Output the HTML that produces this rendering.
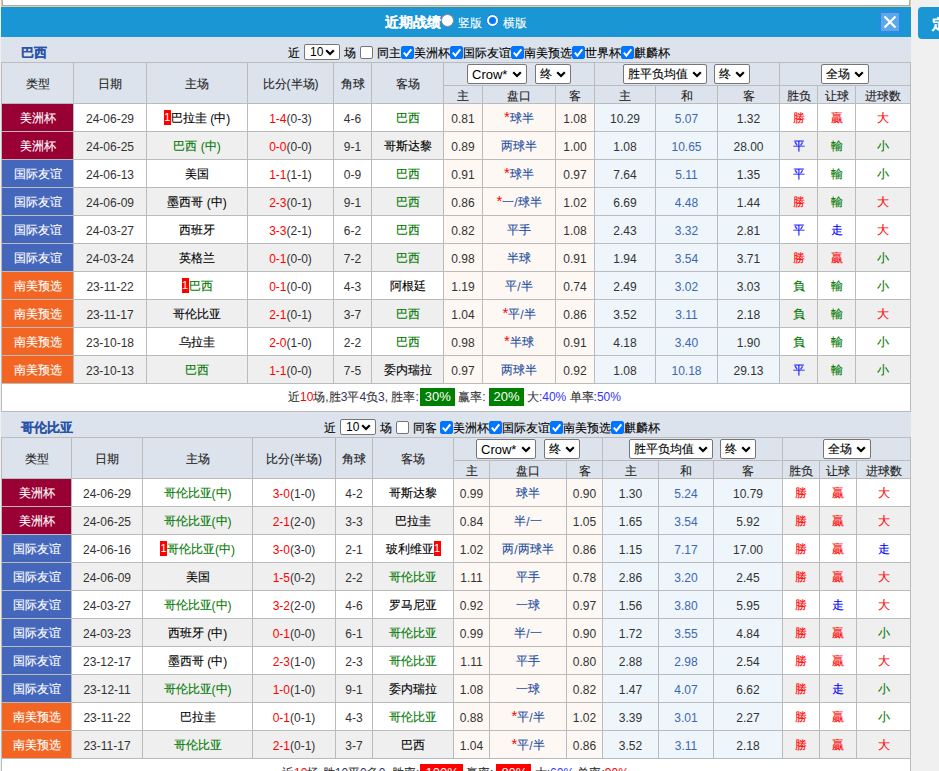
<!DOCTYPE html><html><head><meta charset="utf-8"><style>
html,body{margin:0;padding:0;}
body{width:939px;height:771px;overflow:hidden;background:#f0f0f0;position:relative;font-family:"Liberation Sans",sans-serif;font-size:12px;}
#root>div{position:absolute;display:flex;align-items:center;justify-content:center;white-space:nowrap;box-sizing:border-box;}
#root>div.tx{display:block;height:auto;width:auto;line-height:16px;}
.c{-webkit-text-stroke-width:0.12px}.cd{position:relative;top:-1px}
.rb{background:#f00;color:#fff;display:inline-block;width:7px;height:15px;line-height:15px;text-align:center;font-size:11px;position:relative;top:-2px}
#root>div.sel{height:20px;background:#fff;border:1px solid #767676;border-radius:2px;justify-content:flex-start;padding-left:4px;font-size:13px;color:#000;}
.sel .chev{position:absolute;right:4px;top:6px;}
#root>div.sel.sm{height:16px;padding-left:5px;font-size:12px}
.sel.sm .chev{top:4px}
#root>div.cb{width:13px;height:13px;border:1px solid #767676;border-radius:2px;background:#fff;}
#root>div.cb.on{background:#0075ff;border-color:#0075ff;}
.cb svg{position:absolute;left:-1px;top:-1px;}
</style></head><body><div id="root"><div style="left:1px;top:-10px;width:910px;height:17px;background:#e9cf9b"></div><div style="left:2px;top:-10px;width:908px;height:16px;background:#aaaaaa"></div><div style="left:3px;top:-10px;width:906px;height:15px;background:#ffffff"></div><div style="left:1px;top:7px;width:910px;height:30px;background:#1b96d5"></div><div class="tx" style="left:385px;top:13px;color:#fff;font-weight:bold;font-size:14px;line-height:18px"><span class="c">近期战绩</span></div><div style="left:441px;top:14px;width:13px;height:13px;border-radius:50%;background:#fff;border:1px solid #888"></div><div class="tx" style="left:458px;top:15px;color:#fff;font-size:12px"><span class="c">竖版</span></div><div style="left:486px;top:14px;width:13px;height:13px;border-radius:50%;background:#fff;border:1px solid #0075ff"><div style="width:7px;height:7px;border-radius:50%;background:#0075ff"></div></div><div class="tx" style="left:503px;top:15px;color:#fff;font-size:12px"><span class="c">横版</span></div><div style="left:879px;top:11px;width:22px;height:22px;background:#2b8be2"></div><div style="left:881px;top:13px;width:18px;height:18px;background:#5ca8e8"></div><div style="left:879px;top:11px;width:22px;height:22px"><svg width="22" height="22" viewBox="0 0 22 22"><path d="M5.5 5.5 L16.5 16.5 M16.5 5.5 L5.5 16.5" stroke="#fff" stroke-width="2.2"/></svg></div><div style="left:918px;top:7px;width:40px;height:32px;background:#1b96d5;border-radius:4px;color:#fff;font-size:14px;font-weight:bold;justify-content:flex-start;padding-left:14px;padding-top:4px"><span class="c">定</span></div><div style="left:1px;top:37px;width:910px;height:734px;background:#dce3ec"></div><div style="left:21px;top:37px;width:120px;height:25px;color:#2b53a8;font-weight:bold;font-size:13px;justify-content:flex-start;padding-top:6px;box-sizing:border-box"><span class="c">巴西</span></div><div class="tx" style="left:288px;top:45px;"><span class="c">近</span></div><div class="sel sm" style="left:304px;top:44px;width:36px;font-size:12px"><span class="st">10</span><svg class="chev" width="10" height="7" viewBox="0 0 10 7"><path d="M1.2 1.2 L5 5 L8.8 1.2" stroke="#000" stroke-width="2.2" fill="none"/></svg></div><div class="tx" style="left:344px;top:45px;"><span class="c">场</span></div><div class="cb" style="left:360px;top:46px"></div><div class="tx" style="left:377px;top:45px;"><span class="c">同主</span></div><div class="cb on" style="left:401px;top:46px"><svg width="13" height="13" viewBox="0 0 13 13"><path d="M2.8 6.6 L5.4 9.6 L10.3 3.4" stroke="#fff" stroke-width="2" fill="none"/></svg></div><div class="tx" style="left:414px;top:45px;"><span class="c">美洲杯</span></div><div class="cb on" style="left:450px;top:46px"><svg width="13" height="13" viewBox="0 0 13 13"><path d="M2.8 6.6 L5.4 9.6 L10.3 3.4" stroke="#fff" stroke-width="2" fill="none"/></svg></div><div class="tx" style="left:463px;top:45px;"><span class="c">国际友谊</span></div><div class="cb on" style="left:511px;top:46px"><svg width="13" height="13" viewBox="0 0 13 13"><path d="M2.8 6.6 L5.4 9.6 L10.3 3.4" stroke="#fff" stroke-width="2" fill="none"/></svg></div><div class="tx" style="left:524px;top:45px;"><span class="c">南美预选</span></div><div class="cb on" style="left:572px;top:46px"><svg width="13" height="13" viewBox="0 0 13 13"><path d="M2.8 6.6 L5.4 9.6 L10.3 3.4" stroke="#fff" stroke-width="2" fill="none"/></svg></div><div class="tx" style="left:585px;top:45px;"><span class="c">世界杯</span></div><div class="cb on" style="left:621px;top:46px"><svg width="13" height="13" viewBox="0 0 13 13"><path d="M2.8 6.6 L5.4 9.6 L10.3 3.4" stroke="#fff" stroke-width="2" fill="none"/></svg></div><div class="tx" style="left:634px;top:45px;"><span class="c">麒麟杯</span></div><div style="left:1px;top:62px;width:909px;height:41px;background:#dce3ec"></div><div style="left:2px;top:104px;width:71px;height:27px;background:#990033;padding-top:3px"><span style="color:#fff"><span class="c cd">美洲杯</span></span></div><div style="left:74px;top:104px;width:72px;height:27px;background:#ffffff;padding-top:3px"><span style="color:#333333">24-06-29</span></div><div style="left:147px;top:104px;width:100px;height:27px;background:#ffffff;padding-top:3px"><span class="rb">1</span><span style="color:#000"><span class="c cd">巴拉圭</span> (<span class="c cd">中</span>)</span></div><div style="left:248px;top:104px;width:85px;height:27px;background:#ffffff;padding-top:3px"><span style="color:#ff0000">1-4</span><span style="color:#333333">(0-3)</span></div><div style="left:334px;top:104px;width:37px;height:27px;background:#ffffff;padding-top:3px"><span style="color:#333333">4-6</span></div><div style="left:372px;top:104px;width:71px;height:27px;background:#ffffff;padding-top:3px"><span style="color:#007800"><span class="c cd">巴西</span></span></div><div style="left:444px;top:104px;width:38px;height:27px;background:#fdf8f4;padding-top:3px"><span style="color:#333333">0.81</span></div><div style="left:483px;top:104px;width:72px;height:27px;background:#fdf8f4;padding-top:3px"><span style="color:#ff0000;font-size:15px;position:relative;top:-3px">*</span><span style="color:#1f4f9f"><span class="c cd">球半</span></span></div><div style="left:556px;top:104px;width:38px;height:27px;background:#fdf8f4;padding-top:3px"><span style="color:#333333">1.08</span></div><div style="left:595px;top:104px;width:60px;height:27px;background:#eef6fb;padding-top:3px"><span style="color:#333333">10.29</span></div><div style="left:656px;top:104px;width:61px;height:27px;background:#eef6fb;padding-top:3px"><span style="color:#3d66b0">5.07</span></div><div style="left:718px;top:104px;width:61px;height:27px;background:#eef6fb;padding-top:3px"><span style="color:#333333">1.32</span></div><div style="left:780px;top:104px;width:37px;height:27px;background:#ffffff;padding-top:3px"><span style="color:#ff0000"><span class="c cd">勝</span></span></div><div style="left:818px;top:104px;width:37px;height:27px;background:#ffffff;padding-top:3px"><span style="color:#ff0000"><span class="c cd">贏</span></span></div><div style="left:856px;top:104px;width:54px;height:27px;background:#ffffff;padding-top:3px"><span style="color:#ff0000"><span class="c cd">大</span></span></div><div style="left:2px;top:132px;width:71px;height:27px;background:#990033;padding-top:3px"><span style="color:#fff"><span class="c cd">美洲杯</span></span></div><div style="left:74px;top:132px;width:72px;height:27px;background:#efefef;padding-top:3px"><span style="color:#333333">24-06-25</span></div><div style="left:147px;top:132px;width:100px;height:27px;background:#efefef;padding-top:3px"><span style="color:#007800"><span class="c cd">巴西</span> (<span class="c cd">中</span>)</span></div><div style="left:248px;top:132px;width:85px;height:27px;background:#efefef;padding-top:3px"><span style="color:#ff0000">0-0</span><span style="color:#333333">(0-0)</span></div><div style="left:334px;top:132px;width:37px;height:27px;background:#efefef;padding-top:3px"><span style="color:#333333">9-1</span></div><div style="left:372px;top:132px;width:71px;height:27px;background:#efefef;padding-top:3px"><span style="color:#000"><span class="c cd">哥斯达黎</span></span></div><div style="left:444px;top:132px;width:38px;height:27px;background:#fdf8f4;padding-top:3px"><span style="color:#333333">0.89</span></div><div style="left:483px;top:132px;width:72px;height:27px;background:#fdf8f4;padding-top:3px"><span style="color:#1f4f9f"><span class="c cd">两球半</span></span></div><div style="left:556px;top:132px;width:38px;height:27px;background:#fdf8f4;padding-top:3px"><span style="color:#333333">1.00</span></div><div style="left:595px;top:132px;width:60px;height:27px;background:#eef6fb;padding-top:3px"><span style="color:#333333">1.08</span></div><div style="left:656px;top:132px;width:61px;height:27px;background:#eef6fb;padding-top:3px"><span style="color:#3d66b0">10.65</span></div><div style="left:718px;top:132px;width:61px;height:27px;background:#eef6fb;padding-top:3px"><span style="color:#333333">28.00</span></div><div style="left:780px;top:132px;width:37px;height:27px;background:#efefef;padding-top:3px"><span style="color:#0000ff"><span class="c cd">平</span></span></div><div style="left:818px;top:132px;width:37px;height:27px;background:#efefef;padding-top:3px"><span style="color:#007800"><span class="c cd">輸</span></span></div><div style="left:856px;top:132px;width:54px;height:27px;background:#efefef;padding-top:3px"><span style="color:#007800"><span class="c cd">小</span></span></div><div style="left:2px;top:160px;width:71px;height:27px;background:#4466bb;padding-top:3px"><span style="color:#fff"><span class="c cd">国际友谊</span></span></div><div style="left:74px;top:160px;width:72px;height:27px;background:#ffffff;padding-top:3px"><span style="color:#333333">24-06-13</span></div><div style="left:147px;top:160px;width:100px;height:27px;background:#ffffff;padding-top:3px"><span style="color:#000"><span class="c cd">美国</span></span></div><div style="left:248px;top:160px;width:85px;height:27px;background:#ffffff;padding-top:3px"><span style="color:#ff0000">1-1</span><span style="color:#333333">(1-1)</span></div><div style="left:334px;top:160px;width:37px;height:27px;background:#ffffff;padding-top:3px"><span style="color:#333333">0-9</span></div><div style="left:372px;top:160px;width:71px;height:27px;background:#ffffff;padding-top:3px"><span style="color:#007800"><span class="c cd">巴西</span></span></div><div style="left:444px;top:160px;width:38px;height:27px;background:#fdf8f4;padding-top:3px"><span style="color:#333333">0.91</span></div><div style="left:483px;top:160px;width:72px;height:27px;background:#fdf8f4;padding-top:3px"><span style="color:#ff0000;font-size:15px;position:relative;top:-3px">*</span><span style="color:#1f4f9f"><span class="c cd">球半</span></span></div><div style="left:556px;top:160px;width:38px;height:27px;background:#fdf8f4;padding-top:3px"><span style="color:#333333">0.97</span></div><div style="left:595px;top:160px;width:60px;height:27px;background:#eef6fb;padding-top:3px"><span style="color:#333333">7.64</span></div><div style="left:656px;top:160px;width:61px;height:27px;background:#eef6fb;padding-top:3px"><span style="color:#3d66b0">5.11</span></div><div style="left:718px;top:160px;width:61px;height:27px;background:#eef6fb;padding-top:3px"><span style="color:#333333">1.35</span></div><div style="left:780px;top:160px;width:37px;height:27px;background:#ffffff;padding-top:3px"><span style="color:#0000ff"><span class="c cd">平</span></span></div><div style="left:818px;top:160px;width:37px;height:27px;background:#ffffff;padding-top:3px"><span style="color:#007800"><span class="c cd">輸</span></span></div><div style="left:856px;top:160px;width:54px;height:27px;background:#ffffff;padding-top:3px"><span style="color:#007800"><span class="c cd">小</span></span></div><div style="left:2px;top:188px;width:71px;height:27px;background:#4466bb;padding-top:3px"><span style="color:#fff"><span class="c cd">国际友谊</span></span></div><div style="left:74px;top:188px;width:72px;height:27px;background:#efefef;padding-top:3px"><span style="color:#333333">24-06-09</span></div><div style="left:147px;top:188px;width:100px;height:27px;background:#efefef;padding-top:3px"><span style="color:#000"><span class="c cd">墨西哥</span> (<span class="c cd">中</span>)</span></div><div style="left:248px;top:188px;width:85px;height:27px;background:#efefef;padding-top:3px"><span style="color:#ff0000">2-3</span><span style="color:#333333">(0-1)</span></div><div style="left:334px;top:188px;width:37px;height:27px;background:#efefef;padding-top:3px"><span style="color:#333333">9-1</span></div><div style="left:372px;top:188px;width:71px;height:27px;background:#efefef;padding-top:3px"><span style="color:#007800"><span class="c cd">巴西</span></span></div><div style="left:444px;top:188px;width:38px;height:27px;background:#fdf8f4;padding-top:3px"><span style="color:#333333">0.86</span></div><div style="left:483px;top:188px;width:72px;height:27px;background:#fdf8f4;padding-top:3px"><span style="color:#ff0000;font-size:15px;position:relative;top:-3px">*</span><span style="color:#1f4f9f"><span class="c cd">一</span>/<span class="c cd">球半</span></span></div><div style="left:556px;top:188px;width:38px;height:27px;background:#fdf8f4;padding-top:3px"><span style="color:#333333">1.02</span></div><div style="left:595px;top:188px;width:60px;height:27px;background:#eef6fb;padding-top:3px"><span style="color:#333333">6.69</span></div><div style="left:656px;top:188px;width:61px;height:27px;background:#eef6fb;padding-top:3px"><span style="color:#3d66b0">4.48</span></div><div style="left:718px;top:188px;width:61px;height:27px;background:#eef6fb;padding-top:3px"><span style="color:#333333">1.44</span></div><div style="left:780px;top:188px;width:37px;height:27px;background:#efefef;padding-top:3px"><span style="color:#ff0000"><span class="c cd">勝</span></span></div><div style="left:818px;top:188px;width:37px;height:27px;background:#efefef;padding-top:3px"><span style="color:#007800"><span class="c cd">輸</span></span></div><div style="left:856px;top:188px;width:54px;height:27px;background:#efefef;padding-top:3px"><span style="color:#ff0000"><span class="c cd">大</span></span></div><div style="left:2px;top:216px;width:71px;height:27px;background:#4466bb;padding-top:3px"><span style="color:#fff"><span class="c cd">国际友谊</span></span></div><div style="left:74px;top:216px;width:72px;height:27px;background:#ffffff;padding-top:3px"><span style="color:#333333">24-03-27</span></div><div style="left:147px;top:216px;width:100px;height:27px;background:#ffffff;padding-top:3px"><span style="color:#000"><span class="c cd">西班牙</span></span></div><div style="left:248px;top:216px;width:85px;height:27px;background:#ffffff;padding-top:3px"><span style="color:#ff0000">3-3</span><span style="color:#333333">(2-1)</span></div><div style="left:334px;top:216px;width:37px;height:27px;background:#ffffff;padding-top:3px"><span style="color:#333333">6-2</span></div><div style="left:372px;top:216px;width:71px;height:27px;background:#ffffff;padding-top:3px"><span style="color:#007800"><span class="c cd">巴西</span></span></div><div style="left:444px;top:216px;width:38px;height:27px;background:#fdf8f4;padding-top:3px"><span style="color:#333333">0.82</span></div><div style="left:483px;top:216px;width:72px;height:27px;background:#fdf8f4;padding-top:3px"><span style="color:#1f4f9f"><span class="c cd">平手</span></span></div><div style="left:556px;top:216px;width:38px;height:27px;background:#fdf8f4;padding-top:3px"><span style="color:#333333">1.08</span></div><div style="left:595px;top:216px;width:60px;height:27px;background:#eef6fb;padding-top:3px"><span style="color:#333333">2.43</span></div><div style="left:656px;top:216px;width:61px;height:27px;background:#eef6fb;padding-top:3px"><span style="color:#3d66b0">3.32</span></div><div style="left:718px;top:216px;width:61px;height:27px;background:#eef6fb;padding-top:3px"><span style="color:#333333">2.81</span></div><div style="left:780px;top:216px;width:37px;height:27px;background:#ffffff;padding-top:3px"><span style="color:#0000ff"><span class="c cd">平</span></span></div><div style="left:818px;top:216px;width:37px;height:27px;background:#ffffff;padding-top:3px"><span style="color:#0000ff"><span class="c cd">走</span></span></div><div style="left:856px;top:216px;width:54px;height:27px;background:#ffffff;padding-top:3px"><span style="color:#ff0000"><span class="c cd">大</span></span></div><div style="left:2px;top:244px;width:71px;height:27px;background:#4466bb;padding-top:3px"><span style="color:#fff"><span class="c cd">国际友谊</span></span></div><div style="left:74px;top:244px;width:72px;height:27px;background:#efefef;padding-top:3px"><span style="color:#333333">24-03-24</span></div><div style="left:147px;top:244px;width:100px;height:27px;background:#efefef;padding-top:3px"><span style="color:#000"><span class="c cd">英格兰</span></span></div><div style="left:248px;top:244px;width:85px;height:27px;background:#efefef;padding-top:3px"><span style="color:#ff0000">0-1</span><span style="color:#333333">(0-0)</span></div><div style="left:334px;top:244px;width:37px;height:27px;background:#efefef;padding-top:3px"><span style="color:#333333">7-2</span></div><div style="left:372px;top:244px;width:71px;height:27px;background:#efefef;padding-top:3px"><span style="color:#007800"><span class="c cd">巴西</span></span></div><div style="left:444px;top:244px;width:38px;height:27px;background:#fdf8f4;padding-top:3px"><span style="color:#333333">0.98</span></div><div style="left:483px;top:244px;width:72px;height:27px;background:#fdf8f4;padding-top:3px"><span style="color:#1f4f9f"><span class="c cd">半球</span></span></div><div style="left:556px;top:244px;width:38px;height:27px;background:#fdf8f4;padding-top:3px"><span style="color:#333333">0.91</span></div><div style="left:595px;top:244px;width:60px;height:27px;background:#eef6fb;padding-top:3px"><span style="color:#333333">1.94</span></div><div style="left:656px;top:244px;width:61px;height:27px;background:#eef6fb;padding-top:3px"><span style="color:#3d66b0">3.54</span></div><div style="left:718px;top:244px;width:61px;height:27px;background:#eef6fb;padding-top:3px"><span style="color:#333333">3.71</span></div><div style="left:780px;top:244px;width:37px;height:27px;background:#efefef;padding-top:3px"><span style="color:#ff0000"><span class="c cd">勝</span></span></div><div style="left:818px;top:244px;width:37px;height:27px;background:#efefef;padding-top:3px"><span style="color:#ff0000"><span class="c cd">贏</span></span></div><div style="left:856px;top:244px;width:54px;height:27px;background:#efefef;padding-top:3px"><span style="color:#007800"><span class="c cd">小</span></span></div><div style="left:2px;top:272px;width:71px;height:27px;background:#f26522;padding-top:3px"><span style="color:#fff"><span class="c cd">南美预选</span></span></div><div style="left:74px;top:272px;width:72px;height:27px;background:#ffffff;padding-top:3px"><span style="color:#333333">23-11-22</span></div><div style="left:147px;top:272px;width:100px;height:27px;background:#ffffff;padding-top:3px"><span class="rb">1</span><span style="color:#007800"><span class="c cd">巴西</span></span></div><div style="left:248px;top:272px;width:85px;height:27px;background:#ffffff;padding-top:3px"><span style="color:#ff0000">0-1</span><span style="color:#333333">(0-0)</span></div><div style="left:334px;top:272px;width:37px;height:27px;background:#ffffff;padding-top:3px"><span style="color:#333333">4-3</span></div><div style="left:372px;top:272px;width:71px;height:27px;background:#ffffff;padding-top:3px"><span style="color:#000"><span class="c cd">阿根廷</span></span></div><div style="left:444px;top:272px;width:38px;height:27px;background:#fdf8f4;padding-top:3px"><span style="color:#333333">1.19</span></div><div style="left:483px;top:272px;width:72px;height:27px;background:#fdf8f4;padding-top:3px"><span style="color:#1f4f9f"><span class="c cd">平</span>/<span class="c cd">半</span></span></div><div style="left:556px;top:272px;width:38px;height:27px;background:#fdf8f4;padding-top:3px"><span style="color:#333333">0.74</span></div><div style="left:595px;top:272px;width:60px;height:27px;background:#eef6fb;padding-top:3px"><span style="color:#333333">2.49</span></div><div style="left:656px;top:272px;width:61px;height:27px;background:#eef6fb;padding-top:3px"><span style="color:#3d66b0">3.02</span></div><div style="left:718px;top:272px;width:61px;height:27px;background:#eef6fb;padding-top:3px"><span style="color:#333333">3.03</span></div><div style="left:780px;top:272px;width:37px;height:27px;background:#ffffff;padding-top:3px"><span style="color:#007800"><span class="c cd">負</span></span></div><div style="left:818px;top:272px;width:37px;height:27px;background:#ffffff;padding-top:3px"><span style="color:#007800"><span class="c cd">輸</span></span></div><div style="left:856px;top:272px;width:54px;height:27px;background:#ffffff;padding-top:3px"><span style="color:#007800"><span class="c cd">小</span></span></div><div style="left:2px;top:300px;width:71px;height:27px;background:#f26522;padding-top:3px"><span style="color:#fff"><span class="c cd">南美预选</span></span></div><div style="left:74px;top:300px;width:72px;height:27px;background:#efefef;padding-top:3px"><span style="color:#333333">23-11-17</span></div><div style="left:147px;top:300px;width:100px;height:27px;background:#efefef;padding-top:3px"><span style="color:#000"><span class="c cd">哥伦比亚</span></span></div><div style="left:248px;top:300px;width:85px;height:27px;background:#efefef;padding-top:3px"><span style="color:#ff0000">2-1</span><span style="color:#333333">(0-1)</span></div><div style="left:334px;top:300px;width:37px;height:27px;background:#efefef;padding-top:3px"><span style="color:#333333">3-7</span></div><div style="left:372px;top:300px;width:71px;height:27px;background:#efefef;padding-top:3px"><span style="color:#007800"><span class="c cd">巴西</span></span></div><div style="left:444px;top:300px;width:38px;height:27px;background:#fdf8f4;padding-top:3px"><span style="color:#333333">1.04</span></div><div style="left:483px;top:300px;width:72px;height:27px;background:#fdf8f4;padding-top:3px"><span style="color:#ff0000;font-size:15px;position:relative;top:-3px">*</span><span style="color:#1f4f9f"><span class="c cd">平</span>/<span class="c cd">半</span></span></div><div style="left:556px;top:300px;width:38px;height:27px;background:#fdf8f4;padding-top:3px"><span style="color:#333333">0.86</span></div><div style="left:595px;top:300px;width:60px;height:27px;background:#eef6fb;padding-top:3px"><span style="color:#333333">3.52</span></div><div style="left:656px;top:300px;width:61px;height:27px;background:#eef6fb;padding-top:3px"><span style="color:#3d66b0">3.11</span></div><div style="left:718px;top:300px;width:61px;height:27px;background:#eef6fb;padding-top:3px"><span style="color:#333333">2.18</span></div><div style="left:780px;top:300px;width:37px;height:27px;background:#efefef;padding-top:3px"><span style="color:#007800"><span class="c cd">負</span></span></div><div style="left:818px;top:300px;width:37px;height:27px;background:#efefef;padding-top:3px"><span style="color:#007800"><span class="c cd">輸</span></span></div><div style="left:856px;top:300px;width:54px;height:27px;background:#efefef;padding-top:3px"><span style="color:#ff0000"><span class="c cd">大</span></span></div><div style="left:2px;top:328px;width:71px;height:27px;background:#f26522;padding-top:3px"><span style="color:#fff"><span class="c cd">南美预选</span></span></div><div style="left:74px;top:328px;width:72px;height:27px;background:#ffffff;padding-top:3px"><span style="color:#333333">23-10-18</span></div><div style="left:147px;top:328px;width:100px;height:27px;background:#ffffff;padding-top:3px"><span style="color:#000"><span class="c cd">乌拉圭</span></span></div><div style="left:248px;top:328px;width:85px;height:27px;background:#ffffff;padding-top:3px"><span style="color:#ff0000">2-0</span><span style="color:#333333">(1-0)</span></div><div style="left:334px;top:328px;width:37px;height:27px;background:#ffffff;padding-top:3px"><span style="color:#333333">2-2</span></div><div style="left:372px;top:328px;width:71px;height:27px;background:#ffffff;padding-top:3px"><span style="color:#007800"><span class="c cd">巴西</span></span></div><div style="left:444px;top:328px;width:38px;height:27px;background:#fdf8f4;padding-top:3px"><span style="color:#333333">0.98</span></div><div style="left:483px;top:328px;width:72px;height:27px;background:#fdf8f4;padding-top:3px"><span style="color:#ff0000;font-size:15px;position:relative;top:-3px">*</span><span style="color:#1f4f9f"><span class="c cd">半球</span></span></div><div style="left:556px;top:328px;width:38px;height:27px;background:#fdf8f4;padding-top:3px"><span style="color:#333333">0.91</span></div><div style="left:595px;top:328px;width:60px;height:27px;background:#eef6fb;padding-top:3px"><span style="color:#333333">4.18</span></div><div style="left:656px;top:328px;width:61px;height:27px;background:#eef6fb;padding-top:3px"><span style="color:#3d66b0">3.40</span></div><div style="left:718px;top:328px;width:61px;height:27px;background:#eef6fb;padding-top:3px"><span style="color:#333333">1.90</span></div><div style="left:780px;top:328px;width:37px;height:27px;background:#ffffff;padding-top:3px"><span style="color:#007800"><span class="c cd">負</span></span></div><div style="left:818px;top:328px;width:37px;height:27px;background:#ffffff;padding-top:3px"><span style="color:#007800"><span class="c cd">輸</span></span></div><div style="left:856px;top:328px;width:54px;height:27px;background:#ffffff;padding-top:3px"><span style="color:#007800"><span class="c cd">小</span></span></div><div style="left:2px;top:356px;width:71px;height:27px;background:#f26522;padding-top:3px"><span style="color:#fff"><span class="c cd">南美预选</span></span></div><div style="left:74px;top:356px;width:72px;height:27px;background:#efefef;padding-top:3px"><span style="color:#333333">23-10-13</span></div><div style="left:147px;top:356px;width:100px;height:27px;background:#efefef;padding-top:3px"><span style="color:#007800"><span class="c cd">巴西</span></span></div><div style="left:248px;top:356px;width:85px;height:27px;background:#efefef;padding-top:3px"><span style="color:#ff0000">1-1</span><span style="color:#333333">(0-0)</span></div><div style="left:334px;top:356px;width:37px;height:27px;background:#efefef;padding-top:3px"><span style="color:#333333">7-5</span></div><div style="left:372px;top:356px;width:71px;height:27px;background:#efefef;padding-top:3px"><span style="color:#000"><span class="c cd">委内瑞拉</span></span></div><div style="left:444px;top:356px;width:38px;height:27px;background:#fdf8f4;padding-top:3px"><span style="color:#333333">0.97</span></div><div style="left:483px;top:356px;width:72px;height:27px;background:#fdf8f4;padding-top:3px"><span style="color:#1f4f9f"><span class="c cd">两球半</span></span></div><div style="left:556px;top:356px;width:38px;height:27px;background:#fdf8f4;padding-top:3px"><span style="color:#333333">0.92</span></div><div style="left:595px;top:356px;width:60px;height:27px;background:#eef6fb;padding-top:3px"><span style="color:#333333">1.08</span></div><div style="left:656px;top:356px;width:61px;height:27px;background:#eef6fb;padding-top:3px"><span style="color:#3d66b0">10.18</span></div><div style="left:718px;top:356px;width:61px;height:27px;background:#eef6fb;padding-top:3px"><span style="color:#333333">29.13</span></div><div style="left:780px;top:356px;width:37px;height:27px;background:#efefef;padding-top:3px"><span style="color:#0000ff"><span class="c cd">平</span></span></div><div style="left:818px;top:356px;width:37px;height:27px;background:#efefef;padding-top:3px"><span style="color:#007800"><span class="c cd">輸</span></span></div><div style="left:856px;top:356px;width:54px;height:27px;background:#efefef;padding-top:3px"><span style="color:#007800"><span class="c cd">小</span></span></div><div style="left:2px;top:63px;width:71px;height:40px;color:#222;padding-top:2px"><span class="c">类型</span></div><div style="left:74px;top:63px;width:72px;height:40px;color:#222;padding-top:2px"><span class="c">日期</span></div><div style="left:147px;top:63px;width:100px;height:40px;color:#222;padding-top:2px"><span class="c">主场</span></div><div style="left:248px;top:63px;width:85px;height:40px;color:#222;padding-top:2px"><span class="c">比分</span>(<span class="c">半场</span>)</div><div style="left:334px;top:63px;width:37px;height:40px;color:#222;padding-top:2px"><span class="c">角球</span></div><div style="left:372px;top:63px;width:71px;height:40px;color:#222;padding-top:2px"><span class="c">客场</span></div><div style="left:444px;top:86px;width:38px;height:17px;color:#222;padding-top:3px"><span class="c">主</span></div><div style="left:483px;top:86px;width:72px;height:17px;color:#222;padding-top:3px"><span class="c">盘口</span></div><div style="left:556px;top:86px;width:38px;height:17px;color:#222;padding-top:3px"><span class="c">客</span></div><div style="left:595px;top:86px;width:60px;height:17px;color:#222;padding-top:3px"><span class="c">主</span></div><div style="left:656px;top:86px;width:61px;height:17px;color:#222;padding-top:3px"><span class="c">和</span></div><div style="left:718px;top:86px;width:61px;height:17px;color:#222;padding-top:3px"><span class="c">客</span></div><div style="left:780px;top:86px;width:37px;height:17px;color:#222;padding-top:3px"><span class="c">胜负</span></div><div style="left:818px;top:86px;width:37px;height:17px;color:#222;padding-top:3px"><span class="c">让球</span></div><div style="left:856px;top:86px;width:54px;height:17px;color:#222;padding-top:3px"><span class="c">进球数</span></div><div class="sel" style="left:467px;top:64px;width:60px;font-size:13px"><span class="st">Crow*</span><svg class="chev" width="10" height="7" viewBox="0 0 10 7"><path d="M1.2 1.2 L5 5 L8.8 1.2" stroke="#000" stroke-width="2.2" fill="none"/></svg></div><div class="sel" style="left:535px;top:64px;width:36px;font-size:12px"><span class="st"><span class="c">终</span></span><svg class="chev" width="10" height="7" viewBox="0 0 10 7"><path d="M1.2 1.2 L5 5 L8.8 1.2" stroke="#000" stroke-width="2.2" fill="none"/></svg></div><div class="sel" style="left:623px;top:64px;width:84px;font-size:12px"><span class="st"><span class="c">胜平负均值</span></span><svg class="chev" width="10" height="7" viewBox="0 0 10 7"><path d="M1.2 1.2 L5 5 L8.8 1.2" stroke="#000" stroke-width="2.2" fill="none"/></svg></div><div class="sel" style="left:714px;top:64px;width:36px;font-size:12px"><span class="st"><span class="c">终</span></span><svg class="chev" width="10" height="7" viewBox="0 0 10 7"><path d="M1.2 1.2 L5 5 L8.8 1.2" stroke="#000" stroke-width="2.2" fill="none"/></svg></div><div class="sel" style="left:821px;top:64px;width:48px;font-size:12px"><span class="st"><span class="c">全场</span></span><svg class="chev" width="10" height="7" viewBox="0 0 10 7"><path d="M1.2 1.2 L5 5 L8.8 1.2" stroke="#000" stroke-width="2.2" fill="none"/></svg></div><div style="left:1px;top:62px;width:1px;height:322px;background:#bbbbbb"></div><div style="left:73px;top:62px;width:1px;height:322px;background:#bbbbbb"></div><div style="left:146px;top:62px;width:1px;height:322px;background:#bbbbbb"></div><div style="left:247px;top:62px;width:1px;height:322px;background:#bbbbbb"></div><div style="left:333px;top:62px;width:1px;height:322px;background:#bbbbbb"></div><div style="left:371px;top:62px;width:1px;height:322px;background:#bbbbbb"></div><div style="left:443px;top:62px;width:1px;height:322px;background:#bbbbbb"></div><div style="left:482px;top:85px;width:1px;height:299px;background:#bbbbbb"></div><div style="left:555px;top:85px;width:1px;height:299px;background:#bbbbbb"></div><div style="left:594px;top:62px;width:1px;height:322px;background:#bbbbbb"></div><div style="left:655px;top:85px;width:1px;height:299px;background:#bbbbbb"></div><div style="left:717px;top:85px;width:1px;height:299px;background:#bbbbbb"></div><div style="left:779px;top:62px;width:1px;height:322px;background:#bbbbbb"></div><div style="left:817px;top:85px;width:1px;height:299px;background:#bbbbbb"></div><div style="left:855px;top:85px;width:1px;height:299px;background:#bbbbbb"></div><div style="left:910px;top:62px;width:1px;height:322px;background:#bbbbbb"></div><div style="left:1px;top:62px;width:910px;height:1px;background:#bbbbbb"></div><div style="left:443px;top:85px;width:468px;height:1px;background:#bbbbbb"></div><div style="left:1px;top:103px;width:910px;height:1px;background:#bbbbbb"></div><div style="left:1px;top:131px;width:910px;height:1px;background:#bbbbbb"></div><div style="left:1px;top:159px;width:910px;height:1px;background:#bbbbbb"></div><div style="left:1px;top:187px;width:910px;height:1px;background:#bbbbbb"></div><div style="left:1px;top:215px;width:910px;height:1px;background:#bbbbbb"></div><div style="left:1px;top:243px;width:910px;height:1px;background:#bbbbbb"></div><div style="left:1px;top:271px;width:910px;height:1px;background:#bbbbbb"></div><div style="left:1px;top:299px;width:910px;height:1px;background:#bbbbbb"></div><div style="left:1px;top:327px;width:910px;height:1px;background:#bbbbbb"></div><div style="left:1px;top:355px;width:910px;height:1px;background:#bbbbbb"></div><div style="left:1px;top:383px;width:910px;height:1px;background:#bbbbbb"></div><div style="left:1px;top:384px;width:910px;height:27px;background:#fff"></div><div style="left:1px;top:383px;width:1px;height:29px;background:#bbbbbb"></div><div style="left:910px;top:383px;width:1px;height:29px;background:#bbbbbb"></div><div style="left:1px;top:411px;width:910px;height:1px;background:#bbbbbb"></div><div class="tx" style="left:288px;top:388px;color:#333"><span class="c">近</span><span style="color:#f00">10</span><span class="c">场</span>,<span class="c">胜</span><span style="color:#336">3</span><span class="c">平</span><span style="color:#336">4</span><span class="c">负</span><span style="color:#336">3</span>, <span class="c">胜率</span>:<span class="gb" style="margin-left:1px">30%</span> <span class="c">赢率</span>:<span class="gb" style="margin-left:3px">20%</span> <span class="c">大</span>:<span style="color:#3333ff">40%</span> <span class="c">单率</span>:<span style="color:#3333ff">50%</span></div><div style="left:21px;top:412px;width:120px;height:25px;color:#2b53a8;font-weight:bold;font-size:13px;justify-content:flex-start;padding-top:6px;box-sizing:border-box"><span class="c">哥伦比亚</span></div><div class="tx" style="left:324px;top:420px;"><span class="c">近</span></div><div class="sel sm" style="left:340px;top:419px;width:36px;font-size:12px"><span class="st">10</span><svg class="chev" width="10" height="7" viewBox="0 0 10 7"><path d="M1.2 1.2 L5 5 L8.8 1.2" stroke="#000" stroke-width="2.2" fill="none"/></svg></div><div class="tx" style="left:380px;top:420px;"><span class="c">场</span></div><div class="cb" style="left:396px;top:421px"></div><div class="tx" style="left:413px;top:420px;"><span class="c">同客</span></div><div class="cb on" style="left:440px;top:421px"><svg width="13" height="13" viewBox="0 0 13 13"><path d="M2.8 6.6 L5.4 9.6 L10.3 3.4" stroke="#fff" stroke-width="2" fill="none"/></svg></div><div class="tx" style="left:453px;top:420px;"><span class="c">美洲杯</span></div><div class="cb on" style="left:489px;top:421px"><svg width="13" height="13" viewBox="0 0 13 13"><path d="M2.8 6.6 L5.4 9.6 L10.3 3.4" stroke="#fff" stroke-width="2" fill="none"/></svg></div><div class="tx" style="left:502px;top:420px;"><span class="c">国际友谊</span></div><div class="cb on" style="left:550px;top:421px"><svg width="13" height="13" viewBox="0 0 13 13"><path d="M2.8 6.6 L5.4 9.6 L10.3 3.4" stroke="#fff" stroke-width="2" fill="none"/></svg></div><div class="tx" style="left:563px;top:420px;"><span class="c">南美预选</span></div><div class="cb on" style="left:611px;top:421px"><svg width="13" height="13" viewBox="0 0 13 13"><path d="M2.8 6.6 L5.4 9.6 L10.3 3.4" stroke="#fff" stroke-width="2" fill="none"/></svg></div><div class="tx" style="left:624px;top:420px;"><span class="c">麒麟杯</span></div><div style="left:1px;top:437px;width:909px;height:41px;background:#dce3ec"></div><div style="left:2px;top:479px;width:69px;height:27px;background:#990033;padding-top:3px"><span style="color:#fff"><span class="c cd">美洲杯</span></span></div><div style="left:72px;top:479px;width:70px;height:27px;background:#ffffff;padding-top:3px"><span style="color:#333333">24-06-29</span></div><div style="left:143px;top:479px;width:109px;height:27px;background:#ffffff;padding-top:3px"><span style="color:#007800"><span class="c cd">哥伦比亚</span>(<span class="c cd">中</span>)</span></div><div style="left:253px;top:479px;width:82px;height:27px;background:#ffffff;padding-top:3px"><span style="color:#ff0000">3-0</span><span style="color:#333333">(1-0)</span></div><div style="left:336px;top:479px;width:36px;height:27px;background:#ffffff;padding-top:3px"><span style="color:#333333">4-2</span></div><div style="left:373px;top:479px;width:80px;height:27px;background:#ffffff;padding-top:3px"><span style="color:#000"><span class="c cd">哥斯达黎</span></span></div><div style="left:454px;top:479px;width:35px;height:27px;background:#fdf8f4;padding-top:3px"><span style="color:#333333">0.99</span></div><div style="left:490px;top:479px;width:76px;height:27px;background:#fdf8f4;padding-top:3px"><span style="color:#1f4f9f"><span class="c cd">球半</span></span></div><div style="left:567px;top:479px;width:35px;height:27px;background:#fdf8f4;padding-top:3px"><span style="color:#333333">0.90</span></div><div style="left:603px;top:479px;width:55px;height:27px;background:#eef6fb;padding-top:3px"><span style="color:#333333">1.30</span></div><div style="left:659px;top:479px;width:54px;height:27px;background:#eef6fb;padding-top:3px"><span style="color:#3d66b0">5.24</span></div><div style="left:714px;top:479px;width:68px;height:27px;background:#eef6fb;padding-top:3px"><span style="color:#333333">10.79</span></div><div style="left:783px;top:479px;width:36px;height:27px;background:#ffffff;padding-top:3px"><span style="color:#ff0000"><span class="c cd">勝</span></span></div><div style="left:820px;top:479px;width:36px;height:27px;background:#ffffff;padding-top:3px"><span style="color:#ff0000"><span class="c cd">贏</span></span></div><div style="left:857px;top:479px;width:53px;height:27px;background:#ffffff;padding-top:3px"><span style="color:#ff0000"><span class="c cd">大</span></span></div><div style="left:2px;top:507px;width:69px;height:27px;background:#990033;padding-top:3px"><span style="color:#fff"><span class="c cd">美洲杯</span></span></div><div style="left:72px;top:507px;width:70px;height:27px;background:#efefef;padding-top:3px"><span style="color:#333333">24-06-25</span></div><div style="left:143px;top:507px;width:109px;height:27px;background:#efefef;padding-top:3px"><span style="color:#007800"><span class="c cd">哥伦比亚</span>(<span class="c cd">中</span>)</span></div><div style="left:253px;top:507px;width:82px;height:27px;background:#efefef;padding-top:3px"><span style="color:#ff0000">2-1</span><span style="color:#333333">(2-0)</span></div><div style="left:336px;top:507px;width:36px;height:27px;background:#efefef;padding-top:3px"><span style="color:#333333">3-3</span></div><div style="left:373px;top:507px;width:80px;height:27px;background:#efefef;padding-top:3px"><span style="color:#000"><span class="c cd">巴拉圭</span></span></div><div style="left:454px;top:507px;width:35px;height:27px;background:#fdf8f4;padding-top:3px"><span style="color:#333333">0.84</span></div><div style="left:490px;top:507px;width:76px;height:27px;background:#fdf8f4;padding-top:3px"><span style="color:#1f4f9f"><span class="c cd">半</span>/<span class="c cd">一</span></span></div><div style="left:567px;top:507px;width:35px;height:27px;background:#fdf8f4;padding-top:3px"><span style="color:#333333">1.05</span></div><div style="left:603px;top:507px;width:55px;height:27px;background:#eef6fb;padding-top:3px"><span style="color:#333333">1.65</span></div><div style="left:659px;top:507px;width:54px;height:27px;background:#eef6fb;padding-top:3px"><span style="color:#3d66b0">3.54</span></div><div style="left:714px;top:507px;width:68px;height:27px;background:#eef6fb;padding-top:3px"><span style="color:#333333">5.92</span></div><div style="left:783px;top:507px;width:36px;height:27px;background:#efefef;padding-top:3px"><span style="color:#ff0000"><span class="c cd">勝</span></span></div><div style="left:820px;top:507px;width:36px;height:27px;background:#efefef;padding-top:3px"><span style="color:#ff0000"><span class="c cd">贏</span></span></div><div style="left:857px;top:507px;width:53px;height:27px;background:#efefef;padding-top:3px"><span style="color:#ff0000"><span class="c cd">大</span></span></div><div style="left:2px;top:535px;width:69px;height:27px;background:#4466bb;padding-top:3px"><span style="color:#fff"><span class="c cd">国际友谊</span></span></div><div style="left:72px;top:535px;width:70px;height:27px;background:#ffffff;padding-top:3px"><span style="color:#333333">24-06-16</span></div><div style="left:143px;top:535px;width:109px;height:27px;background:#ffffff;padding-top:3px"><span class="rb">1</span><span style="color:#007800"><span class="c cd">哥伦比亚</span>(<span class="c cd">中</span>)</span></div><div style="left:253px;top:535px;width:82px;height:27px;background:#ffffff;padding-top:3px"><span style="color:#ff0000">3-0</span><span style="color:#333333">(3-0)</span></div><div style="left:336px;top:535px;width:36px;height:27px;background:#ffffff;padding-top:3px"><span style="color:#333333">2-1</span></div><div style="left:373px;top:535px;width:80px;height:27px;background:#ffffff;padding-top:3px"><span style="color:#000"><span class="c cd">玻利维亚</span></span><span class="rb">1</span></div><div style="left:454px;top:535px;width:35px;height:27px;background:#fdf8f4;padding-top:3px"><span style="color:#333333">1.02</span></div><div style="left:490px;top:535px;width:76px;height:27px;background:#fdf8f4;padding-top:3px"><span style="color:#1f4f9f"><span class="c cd">两</span>/<span class="c cd">两球半</span></span></div><div style="left:567px;top:535px;width:35px;height:27px;background:#fdf8f4;padding-top:3px"><span style="color:#333333">0.86</span></div><div style="left:603px;top:535px;width:55px;height:27px;background:#eef6fb;padding-top:3px"><span style="color:#333333">1.15</span></div><div style="left:659px;top:535px;width:54px;height:27px;background:#eef6fb;padding-top:3px"><span style="color:#3d66b0">7.17</span></div><div style="left:714px;top:535px;width:68px;height:27px;background:#eef6fb;padding-top:3px"><span style="color:#333333">17.00</span></div><div style="left:783px;top:535px;width:36px;height:27px;background:#ffffff;padding-top:3px"><span style="color:#ff0000"><span class="c cd">勝</span></span></div><div style="left:820px;top:535px;width:36px;height:27px;background:#ffffff;padding-top:3px"><span style="color:#ff0000"><span class="c cd">贏</span></span></div><div style="left:857px;top:535px;width:53px;height:27px;background:#ffffff;padding-top:3px"><span style="color:#0000ff"><span class="c cd">走</span></span></div><div style="left:2px;top:563px;width:69px;height:27px;background:#4466bb;padding-top:3px"><span style="color:#fff"><span class="c cd">国际友谊</span></span></div><div style="left:72px;top:563px;width:70px;height:27px;background:#efefef;padding-top:3px"><span style="color:#333333">24-06-09</span></div><div style="left:143px;top:563px;width:109px;height:27px;background:#efefef;padding-top:3px"><span style="color:#000"><span class="c cd">美国</span></span></div><div style="left:253px;top:563px;width:82px;height:27px;background:#efefef;padding-top:3px"><span style="color:#ff0000">1-5</span><span style="color:#333333">(0-2)</span></div><div style="left:336px;top:563px;width:36px;height:27px;background:#efefef;padding-top:3px"><span style="color:#333333">2-2</span></div><div style="left:373px;top:563px;width:80px;height:27px;background:#efefef;padding-top:3px"><span style="color:#007800"><span class="c cd">哥伦比亚</span></span></div><div style="left:454px;top:563px;width:35px;height:27px;background:#fdf8f4;padding-top:3px"><span style="color:#333333">1.11</span></div><div style="left:490px;top:563px;width:76px;height:27px;background:#fdf8f4;padding-top:3px"><span style="color:#1f4f9f"><span class="c cd">平手</span></span></div><div style="left:567px;top:563px;width:35px;height:27px;background:#fdf8f4;padding-top:3px"><span style="color:#333333">0.78</span></div><div style="left:603px;top:563px;width:55px;height:27px;background:#eef6fb;padding-top:3px"><span style="color:#333333">2.86</span></div><div style="left:659px;top:563px;width:54px;height:27px;background:#eef6fb;padding-top:3px"><span style="color:#3d66b0">3.20</span></div><div style="left:714px;top:563px;width:68px;height:27px;background:#eef6fb;padding-top:3px"><span style="color:#333333">2.45</span></div><div style="left:783px;top:563px;width:36px;height:27px;background:#efefef;padding-top:3px"><span style="color:#ff0000"><span class="c cd">勝</span></span></div><div style="left:820px;top:563px;width:36px;height:27px;background:#efefef;padding-top:3px"><span style="color:#ff0000"><span class="c cd">贏</span></span></div><div style="left:857px;top:563px;width:53px;height:27px;background:#efefef;padding-top:3px"><span style="color:#ff0000"><span class="c cd">大</span></span></div><div style="left:2px;top:591px;width:69px;height:27px;background:#4466bb;padding-top:3px"><span style="color:#fff"><span class="c cd">国际友谊</span></span></div><div style="left:72px;top:591px;width:70px;height:27px;background:#ffffff;padding-top:3px"><span style="color:#333333">24-03-27</span></div><div style="left:143px;top:591px;width:109px;height:27px;background:#ffffff;padding-top:3px"><span style="color:#007800"><span class="c cd">哥伦比亚</span>(<span class="c cd">中</span>)</span></div><div style="left:253px;top:591px;width:82px;height:27px;background:#ffffff;padding-top:3px"><span style="color:#ff0000">3-2</span><span style="color:#333333">(2-0)</span></div><div style="left:336px;top:591px;width:36px;height:27px;background:#ffffff;padding-top:3px"><span style="color:#333333">4-6</span></div><div style="left:373px;top:591px;width:80px;height:27px;background:#ffffff;padding-top:3px"><span style="color:#000"><span class="c cd">罗马尼亚</span></span></div><div style="left:454px;top:591px;width:35px;height:27px;background:#fdf8f4;padding-top:3px"><span style="color:#333333">0.92</span></div><div style="left:490px;top:591px;width:76px;height:27px;background:#fdf8f4;padding-top:3px"><span style="color:#1f4f9f"><span class="c cd">一球</span></span></div><div style="left:567px;top:591px;width:35px;height:27px;background:#fdf8f4;padding-top:3px"><span style="color:#333333">0.97</span></div><div style="left:603px;top:591px;width:55px;height:27px;background:#eef6fb;padding-top:3px"><span style="color:#333333">1.56</span></div><div style="left:659px;top:591px;width:54px;height:27px;background:#eef6fb;padding-top:3px"><span style="color:#3d66b0">3.80</span></div><div style="left:714px;top:591px;width:68px;height:27px;background:#eef6fb;padding-top:3px"><span style="color:#333333">5.95</span></div><div style="left:783px;top:591px;width:36px;height:27px;background:#ffffff;padding-top:3px"><span style="color:#ff0000"><span class="c cd">勝</span></span></div><div style="left:820px;top:591px;width:36px;height:27px;background:#ffffff;padding-top:3px"><span style="color:#0000ff"><span class="c cd">走</span></span></div><div style="left:857px;top:591px;width:53px;height:27px;background:#ffffff;padding-top:3px"><span style="color:#ff0000"><span class="c cd">大</span></span></div><div style="left:2px;top:619px;width:69px;height:27px;background:#4466bb;padding-top:3px"><span style="color:#fff"><span class="c cd">国际友谊</span></span></div><div style="left:72px;top:619px;width:70px;height:27px;background:#efefef;padding-top:3px"><span style="color:#333333">24-03-23</span></div><div style="left:143px;top:619px;width:109px;height:27px;background:#efefef;padding-top:3px"><span style="color:#000"><span class="c cd">西班牙</span> (<span class="c cd">中</span>)</span></div><div style="left:253px;top:619px;width:82px;height:27px;background:#efefef;padding-top:3px"><span style="color:#ff0000">0-1</span><span style="color:#333333">(0-0)</span></div><div style="left:336px;top:619px;width:36px;height:27px;background:#efefef;padding-top:3px"><span style="color:#333333">6-1</span></div><div style="left:373px;top:619px;width:80px;height:27px;background:#efefef;padding-top:3px"><span style="color:#007800"><span class="c cd">哥伦比亚</span></span></div><div style="left:454px;top:619px;width:35px;height:27px;background:#fdf8f4;padding-top:3px"><span style="color:#333333">0.99</span></div><div style="left:490px;top:619px;width:76px;height:27px;background:#fdf8f4;padding-top:3px"><span style="color:#1f4f9f"><span class="c cd">半</span>/<span class="c cd">一</span></span></div><div style="left:567px;top:619px;width:35px;height:27px;background:#fdf8f4;padding-top:3px"><span style="color:#333333">0.90</span></div><div style="left:603px;top:619px;width:55px;height:27px;background:#eef6fb;padding-top:3px"><span style="color:#333333">1.72</span></div><div style="left:659px;top:619px;width:54px;height:27px;background:#eef6fb;padding-top:3px"><span style="color:#3d66b0">3.55</span></div><div style="left:714px;top:619px;width:68px;height:27px;background:#eef6fb;padding-top:3px"><span style="color:#333333">4.84</span></div><div style="left:783px;top:619px;width:36px;height:27px;background:#efefef;padding-top:3px"><span style="color:#ff0000"><span class="c cd">勝</span></span></div><div style="left:820px;top:619px;width:36px;height:27px;background:#efefef;padding-top:3px"><span style="color:#ff0000"><span class="c cd">贏</span></span></div><div style="left:857px;top:619px;width:53px;height:27px;background:#efefef;padding-top:3px"><span style="color:#007800"><span class="c cd">小</span></span></div><div style="left:2px;top:647px;width:69px;height:27px;background:#4466bb;padding-top:3px"><span style="color:#fff"><span class="c cd">国际友谊</span></span></div><div style="left:72px;top:647px;width:70px;height:27px;background:#ffffff;padding-top:3px"><span style="color:#333333">23-12-17</span></div><div style="left:143px;top:647px;width:109px;height:27px;background:#ffffff;padding-top:3px"><span style="color:#000"><span class="c cd">墨西哥</span> (<span class="c cd">中</span>)</span></div><div style="left:253px;top:647px;width:82px;height:27px;background:#ffffff;padding-top:3px"><span style="color:#ff0000">2-3</span><span style="color:#333333">(1-0)</span></div><div style="left:336px;top:647px;width:36px;height:27px;background:#ffffff;padding-top:3px"><span style="color:#333333">2-3</span></div><div style="left:373px;top:647px;width:80px;height:27px;background:#ffffff;padding-top:3px"><span style="color:#007800"><span class="c cd">哥伦比亚</span></span></div><div style="left:454px;top:647px;width:35px;height:27px;background:#fdf8f4;padding-top:3px"><span style="color:#333333">1.11</span></div><div style="left:490px;top:647px;width:76px;height:27px;background:#fdf8f4;padding-top:3px"><span style="color:#1f4f9f"><span class="c cd">平手</span></span></div><div style="left:567px;top:647px;width:35px;height:27px;background:#fdf8f4;padding-top:3px"><span style="color:#333333">0.80</span></div><div style="left:603px;top:647px;width:55px;height:27px;background:#eef6fb;padding-top:3px"><span style="color:#333333">2.88</span></div><div style="left:659px;top:647px;width:54px;height:27px;background:#eef6fb;padding-top:3px"><span style="color:#3d66b0">2.98</span></div><div style="left:714px;top:647px;width:68px;height:27px;background:#eef6fb;padding-top:3px"><span style="color:#333333">2.54</span></div><div style="left:783px;top:647px;width:36px;height:27px;background:#ffffff;padding-top:3px"><span style="color:#ff0000"><span class="c cd">勝</span></span></div><div style="left:820px;top:647px;width:36px;height:27px;background:#ffffff;padding-top:3px"><span style="color:#ff0000"><span class="c cd">贏</span></span></div><div style="left:857px;top:647px;width:53px;height:27px;background:#ffffff;padding-top:3px"><span style="color:#ff0000"><span class="c cd">大</span></span></div><div style="left:2px;top:675px;width:69px;height:27px;background:#4466bb;padding-top:3px"><span style="color:#fff"><span class="c cd">国际友谊</span></span></div><div style="left:72px;top:675px;width:70px;height:27px;background:#efefef;padding-top:3px"><span style="color:#333333">23-12-11</span></div><div style="left:143px;top:675px;width:109px;height:27px;background:#efefef;padding-top:3px"><span style="color:#007800"><span class="c cd">哥伦比亚</span>(<span class="c cd">中</span>)</span></div><div style="left:253px;top:675px;width:82px;height:27px;background:#efefef;padding-top:3px"><span style="color:#ff0000">1-0</span><span style="color:#333333">(1-0)</span></div><div style="left:336px;top:675px;width:36px;height:27px;background:#efefef;padding-top:3px"><span style="color:#333333">9-1</span></div><div style="left:373px;top:675px;width:80px;height:27px;background:#efefef;padding-top:3px"><span style="color:#000"><span class="c cd">委内瑞拉</span></span></div><div style="left:454px;top:675px;width:35px;height:27px;background:#fdf8f4;padding-top:3px"><span style="color:#333333">1.08</span></div><div style="left:490px;top:675px;width:76px;height:27px;background:#fdf8f4;padding-top:3px"><span style="color:#1f4f9f"><span class="c cd">一球</span></span></div><div style="left:567px;top:675px;width:35px;height:27px;background:#fdf8f4;padding-top:3px"><span style="color:#333333">0.82</span></div><div style="left:603px;top:675px;width:55px;height:27px;background:#eef6fb;padding-top:3px"><span style="color:#333333">1.47</span></div><div style="left:659px;top:675px;width:54px;height:27px;background:#eef6fb;padding-top:3px"><span style="color:#3d66b0">4.07</span></div><div style="left:714px;top:675px;width:68px;height:27px;background:#eef6fb;padding-top:3px"><span style="color:#333333">6.62</span></div><div style="left:783px;top:675px;width:36px;height:27px;background:#efefef;padding-top:3px"><span style="color:#ff0000"><span class="c cd">勝</span></span></div><div style="left:820px;top:675px;width:36px;height:27px;background:#efefef;padding-top:3px"><span style="color:#0000ff"><span class="c cd">走</span></span></div><div style="left:857px;top:675px;width:53px;height:27px;background:#efefef;padding-top:3px"><span style="color:#007800"><span class="c cd">小</span></span></div><div style="left:2px;top:703px;width:69px;height:27px;background:#f26522;padding-top:3px"><span style="color:#fff"><span class="c cd">南美预选</span></span></div><div style="left:72px;top:703px;width:70px;height:27px;background:#ffffff;padding-top:3px"><span style="color:#333333">23-11-22</span></div><div style="left:143px;top:703px;width:109px;height:27px;background:#ffffff;padding-top:3px"><span style="color:#000"><span class="c cd">巴拉圭</span></span></div><div style="left:253px;top:703px;width:82px;height:27px;background:#ffffff;padding-top:3px"><span style="color:#ff0000">0-1</span><span style="color:#333333">(0-1)</span></div><div style="left:336px;top:703px;width:36px;height:27px;background:#ffffff;padding-top:3px"><span style="color:#333333">4-3</span></div><div style="left:373px;top:703px;width:80px;height:27px;background:#ffffff;padding-top:3px"><span style="color:#007800"><span class="c cd">哥伦比亚</span></span></div><div style="left:454px;top:703px;width:35px;height:27px;background:#fdf8f4;padding-top:3px"><span style="color:#333333">0.88</span></div><div style="left:490px;top:703px;width:76px;height:27px;background:#fdf8f4;padding-top:3px"><span style="color:#ff0000;font-size:15px;position:relative;top:-3px">*</span><span style="color:#1f4f9f"><span class="c cd">平</span>/<span class="c cd">半</span></span></div><div style="left:567px;top:703px;width:35px;height:27px;background:#fdf8f4;padding-top:3px"><span style="color:#333333">1.02</span></div><div style="left:603px;top:703px;width:55px;height:27px;background:#eef6fb;padding-top:3px"><span style="color:#333333">3.39</span></div><div style="left:659px;top:703px;width:54px;height:27px;background:#eef6fb;padding-top:3px"><span style="color:#3d66b0">3.01</span></div><div style="left:714px;top:703px;width:68px;height:27px;background:#eef6fb;padding-top:3px"><span style="color:#333333">2.27</span></div><div style="left:783px;top:703px;width:36px;height:27px;background:#ffffff;padding-top:3px"><span style="color:#ff0000"><span class="c cd">勝</span></span></div><div style="left:820px;top:703px;width:36px;height:27px;background:#ffffff;padding-top:3px"><span style="color:#ff0000"><span class="c cd">贏</span></span></div><div style="left:857px;top:703px;width:53px;height:27px;background:#ffffff;padding-top:3px"><span style="color:#007800"><span class="c cd">小</span></span></div><div style="left:2px;top:731px;width:69px;height:27px;background:#f26522;padding-top:3px"><span style="color:#fff"><span class="c cd">南美预选</span></span></div><div style="left:72px;top:731px;width:70px;height:27px;background:#efefef;padding-top:3px"><span style="color:#333333">23-11-17</span></div><div style="left:143px;top:731px;width:109px;height:27px;background:#efefef;padding-top:3px"><span style="color:#007800"><span class="c cd">哥伦比亚</span></span></div><div style="left:253px;top:731px;width:82px;height:27px;background:#efefef;padding-top:3px"><span style="color:#ff0000">2-1</span><span style="color:#333333">(0-1)</span></div><div style="left:336px;top:731px;width:36px;height:27px;background:#efefef;padding-top:3px"><span style="color:#333333">3-7</span></div><div style="left:373px;top:731px;width:80px;height:27px;background:#efefef;padding-top:3px"><span style="color:#000"><span class="c cd">巴西</span></span></div><div style="left:454px;top:731px;width:35px;height:27px;background:#fdf8f4;padding-top:3px"><span style="color:#333333">1.04</span></div><div style="left:490px;top:731px;width:76px;height:27px;background:#fdf8f4;padding-top:3px"><span style="color:#ff0000;font-size:15px;position:relative;top:-3px">*</span><span style="color:#1f4f9f"><span class="c cd">平</span>/<span class="c cd">半</span></span></div><div style="left:567px;top:731px;width:35px;height:27px;background:#fdf8f4;padding-top:3px"><span style="color:#333333">0.86</span></div><div style="left:603px;top:731px;width:55px;height:27px;background:#eef6fb;padding-top:3px"><span style="color:#333333">3.52</span></div><div style="left:659px;top:731px;width:54px;height:27px;background:#eef6fb;padding-top:3px"><span style="color:#3d66b0">3.11</span></div><div style="left:714px;top:731px;width:68px;height:27px;background:#eef6fb;padding-top:3px"><span style="color:#333333">2.18</span></div><div style="left:783px;top:731px;width:36px;height:27px;background:#efefef;padding-top:3px"><span style="color:#ff0000"><span class="c cd">勝</span></span></div><div style="left:820px;top:731px;width:36px;height:27px;background:#efefef;padding-top:3px"><span style="color:#ff0000"><span class="c cd">贏</span></span></div><div style="left:857px;top:731px;width:53px;height:27px;background:#efefef;padding-top:3px"><span style="color:#ff0000"><span class="c cd">大</span></span></div><div style="left:2px;top:438px;width:69px;height:40px;color:#222;padding-top:2px"><span class="c">类型</span></div><div style="left:72px;top:438px;width:70px;height:40px;color:#222;padding-top:2px"><span class="c">日期</span></div><div style="left:143px;top:438px;width:109px;height:40px;color:#222;padding-top:2px"><span class="c">主场</span></div><div style="left:253px;top:438px;width:82px;height:40px;color:#222;padding-top:2px"><span class="c">比分</span>(<span class="c">半场</span>)</div><div style="left:336px;top:438px;width:36px;height:40px;color:#222;padding-top:2px"><span class="c">角球</span></div><div style="left:373px;top:438px;width:80px;height:40px;color:#222;padding-top:2px"><span class="c">客场</span></div><div style="left:454px;top:461px;width:35px;height:17px;color:#222;padding-top:3px"><span class="c">主</span></div><div style="left:490px;top:461px;width:76px;height:17px;color:#222;padding-top:3px"><span class="c">盘口</span></div><div style="left:567px;top:461px;width:35px;height:17px;color:#222;padding-top:3px"><span class="c">客</span></div><div style="left:603px;top:461px;width:55px;height:17px;color:#222;padding-top:3px"><span class="c">主</span></div><div style="left:659px;top:461px;width:54px;height:17px;color:#222;padding-top:3px"><span class="c">和</span></div><div style="left:714px;top:461px;width:68px;height:17px;color:#222;padding-top:3px"><span class="c">客</span></div><div style="left:783px;top:461px;width:36px;height:17px;color:#222;padding-top:3px"><span class="c">胜负</span></div><div style="left:820px;top:461px;width:36px;height:17px;color:#222;padding-top:3px"><span class="c">让球</span></div><div style="left:857px;top:461px;width:53px;height:17px;color:#222;padding-top:3px"><span class="c">进球数</span></div><div class="sel" style="left:476px;top:439px;width:60px;font-size:13px"><span class="st">Crow*</span><svg class="chev" width="10" height="7" viewBox="0 0 10 7"><path d="M1.2 1.2 L5 5 L8.8 1.2" stroke="#000" stroke-width="2.2" fill="none"/></svg></div><div class="sel" style="left:544px;top:439px;width:36px;font-size:12px"><span class="st"><span class="c">终</span></span><svg class="chev" width="10" height="7" viewBox="0 0 10 7"><path d="M1.2 1.2 L5 5 L8.8 1.2" stroke="#000" stroke-width="2.2" fill="none"/></svg></div><div class="sel" style="left:629px;top:439px;width:84px;font-size:12px"><span class="st"><span class="c">胜平负均值</span></span><svg class="chev" width="10" height="7" viewBox="0 0 10 7"><path d="M1.2 1.2 L5 5 L8.8 1.2" stroke="#000" stroke-width="2.2" fill="none"/></svg></div><div class="sel" style="left:720px;top:439px;width:36px;font-size:12px"><span class="st"><span class="c">终</span></span><svg class="chev" width="10" height="7" viewBox="0 0 10 7"><path d="M1.2 1.2 L5 5 L8.8 1.2" stroke="#000" stroke-width="2.2" fill="none"/></svg></div><div class="sel" style="left:823px;top:439px;width:48px;font-size:12px"><span class="st"><span class="c">全场</span></span><svg class="chev" width="10" height="7" viewBox="0 0 10 7"><path d="M1.2 1.2 L5 5 L8.8 1.2" stroke="#000" stroke-width="2.2" fill="none"/></svg></div><div style="left:1px;top:437px;width:1px;height:322px;background:#bbbbbb"></div><div style="left:71px;top:437px;width:1px;height:322px;background:#bbbbbb"></div><div style="left:142px;top:437px;width:1px;height:322px;background:#bbbbbb"></div><div style="left:252px;top:437px;width:1px;height:322px;background:#bbbbbb"></div><div style="left:335px;top:437px;width:1px;height:322px;background:#bbbbbb"></div><div style="left:372px;top:437px;width:1px;height:322px;background:#bbbbbb"></div><div style="left:453px;top:437px;width:1px;height:322px;background:#bbbbbb"></div><div style="left:489px;top:460px;width:1px;height:299px;background:#bbbbbb"></div><div style="left:566px;top:460px;width:1px;height:299px;background:#bbbbbb"></div><div style="left:602px;top:437px;width:1px;height:322px;background:#bbbbbb"></div><div style="left:658px;top:460px;width:1px;height:299px;background:#bbbbbb"></div><div style="left:713px;top:460px;width:1px;height:299px;background:#bbbbbb"></div><div style="left:782px;top:437px;width:1px;height:322px;background:#bbbbbb"></div><div style="left:819px;top:460px;width:1px;height:299px;background:#bbbbbb"></div><div style="left:856px;top:460px;width:1px;height:299px;background:#bbbbbb"></div><div style="left:910px;top:437px;width:1px;height:322px;background:#bbbbbb"></div><div style="left:1px;top:437px;width:910px;height:1px;background:#bbbbbb"></div><div style="left:453px;top:460px;width:458px;height:1px;background:#bbbbbb"></div><div style="left:1px;top:478px;width:910px;height:1px;background:#bbbbbb"></div><div style="left:1px;top:506px;width:910px;height:1px;background:#bbbbbb"></div><div style="left:1px;top:534px;width:910px;height:1px;background:#bbbbbb"></div><div style="left:1px;top:562px;width:910px;height:1px;background:#bbbbbb"></div><div style="left:1px;top:590px;width:910px;height:1px;background:#bbbbbb"></div><div style="left:1px;top:618px;width:910px;height:1px;background:#bbbbbb"></div><div style="left:1px;top:646px;width:910px;height:1px;background:#bbbbbb"></div><div style="left:1px;top:674px;width:910px;height:1px;background:#bbbbbb"></div><div style="left:1px;top:702px;width:910px;height:1px;background:#bbbbbb"></div><div style="left:1px;top:730px;width:910px;height:1px;background:#bbbbbb"></div><div style="left:1px;top:758px;width:910px;height:1px;background:#bbbbbb"></div><div style="left:1px;top:759px;width:910px;height:20px;background:#fff"></div><div style="left:1px;top:758px;width:1px;height:20px;background:#bbbbbb"></div><div style="left:910px;top:758px;width:1px;height:20px;background:#bbbbbb"></div><div class="tx" style="left:282px;top:764px;color:#333"><span class="c">近</span><span style="color:#f00">10</span><span class="c">场</span>,<span class="c">胜</span><span style="color:#336">10</span><span class="c">平</span><span style="color:#336">0</span><span class="c">负</span><span style="color:#336">0</span>, <span class="c">胜率</span>:<span class="rbx" style="margin-left:1px">100%</span> <span class="c">赢率</span>:<span class="rbx" style="margin-left:3px">80%</span> <span class="c">大</span>:<span style="color:#3333ff">60%</span> <span class="c">单率</span>:<span style="color:#f00">90%</span></div></div><style>.gb{background:#008000;color:#fff;display:inline-block;padding:0 4px 0 5px;height:18px;line-height:18px;font-size:13px}.rbx{background:#f00;color:#fff;display:inline-block;padding:0 4px 0 5px;height:18px;line-height:18px;font-size:13px}</style></body></html>
